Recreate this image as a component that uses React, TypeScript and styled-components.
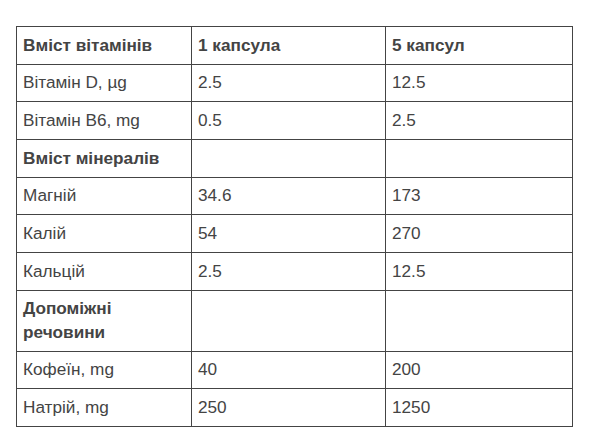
import React from 'react';
import styled, { createGlobalStyle } from 'styled-components';

const GlobalStyle = createGlobalStyle`
  html, body {
    margin: 0;
    padding: 0;
    background: #fff;
  }
  body {
    font-family: 'Liberation Sans', Arial, sans-serif;
    color: #444;
  }
`;

const Page = styled.div`
  padding: 26px 20px 20px 16px;
`;

const Table = styled.table`
  border-collapse: collapse;
  table-layout: fixed;
  width: 556px;
  font-size: 17.2px;
  line-height: 23.3px;
`;

const Col = styled.col<{ $w: number }>`
  width: ${(p) => p.$w}px;
`;

const Cell = styled.td<{ $bold?: boolean }>`
  border: 1px solid #444;
  padding: 6.7px 6px;
  vertical-align: top;
  text-align: left;
  font-weight: ${(p) => (p.$bold ? 700 : 400)};
`;

type Row = { label: string; one: string; five: string; bold?: boolean };

const rows: Row[] = [
  { label: 'Вміст вітамінів', one: '1 капсула', five: '5 капсул', bold: true },
  { label: 'Вітамін D, µg', one: '2.5', five: '12.5' },
  { label: 'Вітамін B6, mg', one: '0.5', five: '2.5' },
  { label: 'Вміст мінералів', one: '', five: '', bold: true },
  { label: 'Магній', one: '34.6', five: '173' },
  { label: 'Калій', one: '54', five: '270' },
  { label: 'Кальцій', one: '2.5', five: '12.5' },
  { label: 'Допоміжні речовини', one: '', five: '', bold: true },
  { label: 'Кофеїн, mg', one: '40', five: '200' },
  { label: 'Натрій, mg', one: '250', five: '1250' },
];

export default function App() {
  return (
    <>
      <GlobalStyle />
      <Page>
        <Table>
          <colgroup>
            <Col $w={175} />
            <Col $w={194} />
            <Col $w={187} />
          </colgroup>
          <tbody>
            {rows.map((r, i) => (
              <tr key={i}>
                <Cell $bold={r.bold}>{r.label}</Cell>
                <Cell $bold={r.bold}>{r.one}</Cell>
                <Cell $bold={r.bold}>{r.five}</Cell>
              </tr>
            ))}
          </tbody>
        </Table>
      </Page>
    </>
  );
}
